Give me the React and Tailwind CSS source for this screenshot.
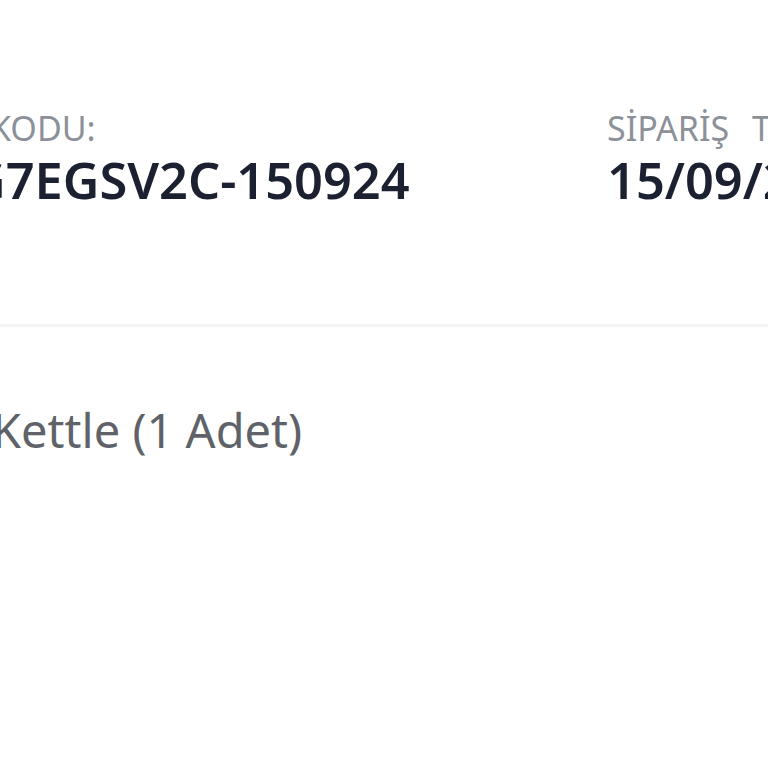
export default function App() {
  return (
    <div className="w-[768px] h-[768px] overflow-hidden bg-white" style={{ fontFamily: '"Noto Sans", "Open Sans", sans-serif' }}>
      <div className="flex pt-[108px]">
        <div className="ml-[-30px] w-[637px] shrink-0 flex flex-col">
          <div className="ml-[20px] text-[34px] leading-[40px] text-[#8c9199] whitespace-nowrap">KODU:</div>
          <div className="mt-[2px] ml-[-1px] text-[50.5px] leading-[60px] font-semibold text-[#1b2130] whitespace-nowrap">G7EGSV2C-150924</div>
        </div>
        <div className="flex flex-col">
          <div className="text-[34px] leading-[40px] text-[#8c9199] whitespace-nowrap [word-spacing:14px]">SİPARİŞ TARİHİ:</div>
          <div className="mt-[2px] text-[50.5px] leading-[60px] font-semibold text-[#1b2130] whitespace-nowrap">15/09/2024</div>
        </div>
      </div>
      <div className="mt-[114px] h-[3px] bg-[#f3f3f3]" />
      <div className="mt-[73px] ml-[-8px] text-[47px] leading-[60px] text-[#5f6369] whitespace-nowrap">Kettle (1 Adet)</div>
    </div>
  );
}
